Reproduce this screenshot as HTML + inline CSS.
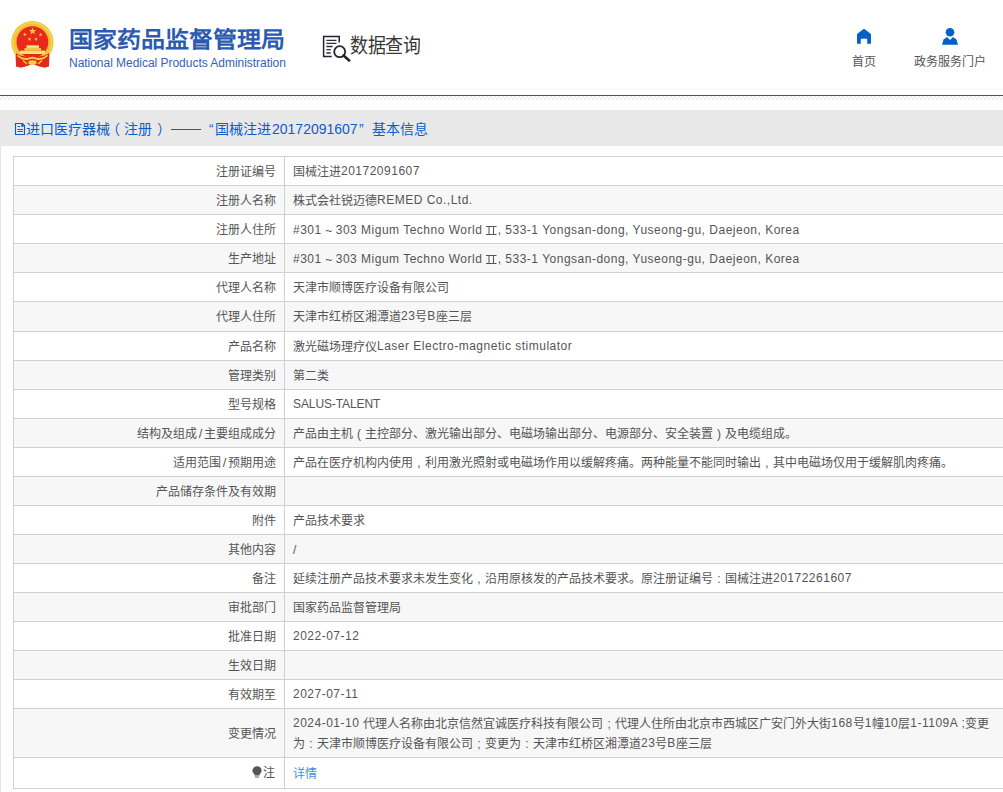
<!DOCTYPE html>
<html lang="zh-CN"><head><meta charset="utf-8"><title>NMPA</title>
<style>
html,body{margin:0;padding:0;background:#fff;}
body{width:1003px;height:792px;overflow:hidden;position:relative;font-family:"Liberation Sans",sans-serif;color:#333;}
.abs{position:absolute;}
#emblem{position:absolute;left:11px;top:21px;width:44px;height:48px;}
#t1{position:absolute;left:69px;top:23px;font-size:24px;font-weight:bold;color:#2b5bb0;white-space:nowrap;line-height:30px;transform:scaleY(0.92);transform-origin:0 100%;}
#t2{position:absolute;left:69px;top:56px;font-size:12px;color:#3563b0;white-space:nowrap;line-height:14px;letter-spacing:-0.03px;}
#sq{position:absolute;left:322px;top:35px;}
#sqt{position:absolute;left:350px;top:33px;font-size:18px;color:#383838;line-height:24px;white-space:nowrap;letter-spacing:-0.5px;transform:scaleY(1.12);transform-origin:0 0;}
.nav{position:absolute;top:55px;font-size:12px;color:#555;line-height:14px;white-space:nowrap;}
#blue{position:absolute;left:0;top:95px;width:1003px;height:1px;background:#0a5fc4;}
#hatch{position:absolute;left:0;top:96px;width:1003px;height:4px;background:repeating-linear-gradient(135deg,#fff 0,#fff 2px,#e3e3e3 2px,#e3e3e3 3px,#fff 3px,#fff 4px);}
#bar{position:absolute;left:0;top:110px;width:1003px;height:36px;background:#e8e8e8;}
.bt{position:absolute;left:26px;top:120px;font-size:14px;color:#0b5ec9;line-height:18px;white-space:nowrap;}

#doc{position:absolute;left:14px;top:122px;}
#leftb{position:absolute;left:0;top:146px;width:1px;height:646px;background:#e3e3e3;}
#tbl{position:absolute;left:0;top:0;}
.row{position:absolute;left:13px;width:1100px;border-top:1px solid #d0d0d0;border-left:1px solid #d0d0d0;}
.bottom{position:absolute;left:13px;width:1100px;height:1px;background:#d0d0d0;}
.vline{position:absolute;left:284px;width:1px;background:#d0d0d0;}
.k{position:absolute;left:0;width:262px;top:-1px;bottom:1px;display:flex;align-items:center;justify-content:flex-end;font-size:12px;color:#555;white-space:nowrap;}
.v{position:absolute;left:279px;top:-1px;bottom:1px;display:flex;align-items:center;font-size:12px;color:#555;white-space:nowrap;}
.v.two{display:block;line-height:20px;padding-top:6px;}
.l{letter-spacing:0.5px;position:relative;top:-1px;}
.tl{display:inline-block;width:14px;text-align:center;}
.r2{display:inline-block;vertical-align:0px;margin-right:0.5px;}
.link{color:#3d8fe6;}
.bulb{display:inline-block;margin-right:1px;vertical-align:-1px;}
.kz{margin-right:1px;}

.fp{display:inline-block;width:12px;text-align:center;}
.sl{display:inline-block;width:7px;text-align:center;font-size:13px;}

</style></head><body>
<svg class="abs" style="left:0;top:0" width="60" height="75" viewBox="0 0 60 75">
 <path d="M15.5 53 L19 55 L27 57.5 L32.5 58 L38 57.5 L46 55 L49.5 53 L49 66 L44 67.5 L38 66 L32.5 64 L27 66 L21 67.5 L16 66z" fill="#e3281c"/>
 <circle cx="32.4" cy="42.3" r="21.2" fill="#f1c233"/>
 <circle cx="32.4" cy="42.3" r="19.5" fill="none" stroke="#f7d760" stroke-width="1.2"/>
 <circle cx="32.4" cy="42.1" r="15.9" fill="#e8291c"/>
 <polygon points="32.60,27.40 33.54,29.91 36.21,30.03 34.12,31.69 34.83,34.27 32.60,32.80 30.37,34.27 31.08,31.69 28.99,30.03 31.66,29.91" fill="#f4d240"/><polygon points="24.80,32.50 25.29,33.82 26.70,33.88 25.60,34.76 25.98,36.12 24.80,35.34 23.62,36.12 24.00,34.76 22.90,33.88 24.31,33.82" fill="#f4d240"/><polygon points="40.60,32.60 41.09,33.92 42.50,33.98 41.40,34.86 41.78,36.22 40.60,35.44 39.42,36.22 39.80,34.86 38.70,33.98 40.11,33.92" fill="#f4d240"/><polygon points="29.50,37.20 29.99,38.52 31.40,38.58 30.30,39.46 30.68,40.82 29.50,40.04 28.32,40.82 28.70,39.46 27.60,38.58 29.01,38.52" fill="#f4d240"/><polygon points="36.00,37.20 36.49,38.52 37.90,38.58 36.80,39.46 37.18,40.82 36.00,40.04 34.82,40.82 35.20,39.46 34.10,38.58 35.51,38.52" fill="#f4d240"/>
 <rect x="26.5" y="45.3" width="12.5" height="2.8" fill="#f6df7a"/>
 <rect x="24.5" y="48" width="16.5" height="2.6" fill="#f0c84a"/>
 <rect x="20" y="50.6" width="25" height="3.4" fill="#f6df7a"/>
 <path d="M16 53 L20 55.5 Q26 57 32.5 56.5 Q39 57 45 55.5 L49 53 L49 66.5 L45 67.5 L38.5 66 L32.5 63.5 L26.5 66 L20 67.5 L16 66.5z" fill="#e3281c"/>
 <path d="M17 54.5 Q24 59.5 29 57.5 Q32.5 56 36 57.5 Q41 59.5 48 54.5 L47.5 56.5 Q41 61.5 36 59.5 Q32.5 58 29 59.5 Q24 61.5 17.5 56.5z" fill="#f3cf45"/>
 <ellipse cx="32.5" cy="62.5" rx="4.2" ry="2.3" fill="#f3cf45"/>
 <path d="M23 60.5 L27 64 M42 60.5 L38 64" stroke="#f3cf45" stroke-width="1.3"/>
</svg>
<div id="t1">国家药品监督管理局</div>
<div id="t2">National Medical Products Administration</div>
<svg id="sq" width="30" height="28" viewBox="0 0 30 28">
 <path d="M9.8 21.6H1.6V1.4H17.2V7.6" fill="none" stroke="#23232f" stroke-width="1.5"/>
 <path d="M4.4 5.3h10.1M4.4 8.3h10.1M4.4 11.5h6.2M4.4 14.7h4.3M4.4 18h4.3" stroke="#2d2d3a" stroke-width="1.3"/>
 <circle cx="17.7" cy="16.7" r="5.5" fill="none" stroke="#23232f" stroke-width="1.8"/>
 <path d="M21.5 20.5L27.2 25.4" stroke="#23232f" stroke-width="2.6" stroke-linecap="round"/>
</svg>
<div id="sqt">数据查询</div>
<svg class="abs" style="left:856px;top:28px" width="16" height="16" viewBox="0 0 16 16"><path d="M8 0.8L15 6V15.8H11.2V10.7H4.8V15.8H1V6z" fill="#0760c8"/></svg>
<div class="nav" style="left:852px">首页</div>
<svg class="abs" style="left:941px;top:27px" width="18" height="18" viewBox="0 0 18 18"><circle cx="9" cy="5.2" r="4.3" fill="#0760c8"/><path d="M1 17.8L2.5 12.5 6 10 9 13 12 10 15.5 12.5 17 17.8z" fill="#0760c8"/></svg>
<div class="nav" style="left:914px">政务服务门户</div>
<div id="blue"></div>
<svg class="abs" style="left:0;top:96px" width="1003" height="4"><defs><pattern id="hp" width="4" height="4" patternUnits="userSpaceOnUse"><rect x="3" y="0" width="1" height="1" fill="#e2e2e2"/><rect x="2" y="1" width="1" height="1" fill="#e2e2e2"/><rect x="1" y="2" width="1" height="1" fill="#e2e2e2"/><rect x="0" y="3" width="1" height="1" fill="#e2e2e2"/></pattern></defs><rect width="1003" height="4" fill="url(#hp)"/></svg>
<div id="bar"></div>
<svg id="doc" width="14" height="15" viewBox="0 0 14 15"><path d="M1.5 1.5H8.5L10.5 3.5V12.5H1.5Z" fill="none" stroke="#0b5ec9" stroke-width="1.1"/><rect x="7.2" y="2.2" width="2.4" height="2.6" fill="#0b5ec9"/><path d="M3.5 4.5H6M3.5 7.5H9M3.5 9.5H9" stroke="#0b5ec9" stroke-width="1.1"/></svg>
<div class="bt" style="left:26px">进口医疗器械</div><div class="bt" style="left:106px">（</div><div class="bt" style="left:124px">注册</div><div class="bt" style="left:157px">）</div><div class="abs" style="left:171px;top:129px;width:30px;height:1px;background:#0b5ec9"></div><div class="bt" style="left:209px">“</div><div class="bt" style="left:215px">国械注进</div><div class="bt" style="left:272px">20172091607</div><div class="bt" style="left:359px">”</div><div class="bt" style="left:372px">基本信息</div>
<div id="leftb"></div>

<div id="tbl">
<div class="row" style="top:156px;height:28px;background:#fff"><div class="k"><span>注册证编号</span></div><div class="v"><span>国械注进<span class="l">20172091607</span></span></div></div>
<div class="row" style="top:185px;height:28px;background:#f7f7f7"><div class="k"><span>注册人名称</span></div><div class="v"><span>株式会社锐迈德<span class="l">REMED Co.,Ltd.</span></span></div></div>
<div class="row" style="top:214px;height:28px;background:#fff"><div class="k"><span>注册人住所</span></div><div class="v"><span style="position:relative;top:3px"><span class="l">#301</span><span class="tl">~</span><span class="l">303 Migum Techno World </span><svg class="r2" width="11" height="9" viewBox="0 0 11 9"><path d="M0 0.5H10.5M0 8.5H10.5M3 0.5V8.5M7.5 0.5V8.5" stroke="#555" stroke-width="1" fill="none"/></svg><span class="l">, 533-1 Yongsan-dong, Yuseong-gu, Daejeon, Korea</span></span></div></div>
<div class="row" style="top:243px;height:28px;background:#f7f7f7"><div class="k"><span>生产地址</span></div><div class="v"><span style="position:relative;top:3px"><span class="l">#301</span><span class="tl">~</span><span class="l">303 Migum Techno World </span><svg class="r2" width="11" height="9" viewBox="0 0 11 9"><path d="M0 0.5H10.5M0 8.5H10.5M3 0.5V8.5M7.5 0.5V8.5" stroke="#555" stroke-width="1" fill="none"/></svg><span class="l">, 533-1 Yongsan-dong, Yuseong-gu, Daejeon, Korea</span></span></div></div>
<div class="row" style="top:272px;height:28px;background:#fff"><div class="k"><span>代理人名称</span></div><div class="v"><span>天津市顺博医疗设备有限公司</span></div></div>
<div class="row" style="top:301px;height:29px;background:#f7f7f7"><div class="k"><span>代理人住所</span></div><div class="v"><span>天津市红桥区湘潭道<span class="l">23</span>号<span class="l">B</span>座三层</span></div></div>
<div class="row" style="top:331px;height:28px;background:#fff"><div class="k"><span>产品名称</span></div><div class="v"><span>激光磁场理疗仪<span class="l">Laser Electro-magnetic stimulator</span></span></div></div>
<div class="row" style="top:360px;height:28px;background:#f7f7f7"><div class="k"><span>管理类别</span></div><div class="v"><span>第二类</span></div></div>
<div class="row" style="top:389px;height:28px;background:#fff"><div class="k"><span>型号规格</span></div><div class="v"><span style="position:relative;top:2px"><span class="l" style="letter-spacing:-0.1px">SALUS-TALENT</span></span></div></div>
<div class="row" style="top:418px;height:28px;background:#f7f7f7"><div class="k"><span>结构及组成<span class="sl">/</span>主要组成成分</span></div><div class="v"><span>产品由主机<span class="fp">(</span>主控部分、激光输出部分、电磁场输出部分、电源部分、安全装置<span class="fp">)</span>及电缆组成。</span></div></div>
<div class="row" style="top:447px;height:28px;background:#fff"><div class="k"><span>适用范围<span class="sl">/</span>预期用途</span></div><div class="v"><span>产品在医疗机构内使用<span class="fp">,</span>利用激光照射或电磁场作用以缓解疼痛。两种能量不能同时输出<span class="fp">,</span>其中电磁场仅用于缓解肌肉疼痛。</span></div></div>
<div class="row" style="top:476px;height:28px;background:#f7f7f7"><div class="k"><span>产品储存条件及有效期</span></div><div class="v"><span></span></div></div>
<div class="row" style="top:505px;height:28px;background:#fff"><div class="k"><span>附件</span></div><div class="v"><span>产品技术要求</span></div></div>
<div class="row" style="top:534px;height:28px;background:#f7f7f7"><div class="k"><span>其他内容</span></div><div class="v"><span style="position:relative;top:3px"><span class="l">/</span></span></div></div>
<div class="row" style="top:563px;height:28px;background:#fff"><div class="k"><span>备注</span></div><div class="v"><span>延续注册产品技术要求未发生变化<span class="fp">,</span>沿用原核发的产品技术要求。原注册证编号<span class="fp">:</span>国械注进<span class="l">20172261607</span></span></div></div>
<div class="row" style="top:592px;height:28px;background:#f7f7f7"><div class="k"><span>审批部门</span></div><div class="v"><span>国家药品监督管理局</span></div></div>
<div class="row" style="top:621px;height:28px;background:#fff"><div class="k"><span>批准日期</span></div><div class="v"><span style="position:relative;top:2px"><span class="l">2022-07-12</span></span></div></div>
<div class="row" style="top:650px;height:28px;background:#f7f7f7"><div class="k"><span>生效日期</span></div><div class="v"><span></span></div></div>
<div class="row" style="top:679px;height:28px;background:#fff"><div class="k"><span>有效期至</span></div><div class="v"><span style="position:relative;top:2px"><span class="l">2027-07-11</span></span></div></div>
<div class="row" style="top:708px;height:48px;background:#f7f7f7"><div class="k"><span>变更情况</span></div><div class="v two"><span><span class="l">2024-01-10 </span>代理人名称由北京信然宜诚医疗科技有限公司<span class="fp">;</span>代理人住所由北京市西城区广安门外大街<span class="l">168</span>号<span class="l">1</span>幢<span class="l">10</span>层<span class="l">1-1109A ;</span>变更<br>为<span class="fp">:</span>天津市顺博医疗设备有限公司<span class="fp">;</span>变更为<span class="fp">:</span>天津市红桥区湘潭道<span class="l">23</span>号<span class="l">B</span>座三层</span></div></div>
<div class="row" style="top:757px;height:30px;background:#fff"><div class="k"><span><span class="bulb"><svg width="10" height="12" viewBox="0 0 10 12"><path d="M5 0.3C2.3 0.3 0.4 2.2 0.4 4.6c0 1.7 1.1 2.8 2 3.5v1.3h5.2V8.1c0.9-0.7 2-1.8 2-3.5C9.6 2.2 7.7 0.3 5 0.3z" fill="#555"/><rect x="3" y="10.4" width="4" height="1.2" fill="#777"/></svg></span><span class="kz">注</span></span></div><div class="v"><span><span class="link">详情</span></span></div></div>
<div class="bottom" style="top:788px"></div>
<div class="vline" style="top:156px;height:633px"></div>
</div>
</body></html>
